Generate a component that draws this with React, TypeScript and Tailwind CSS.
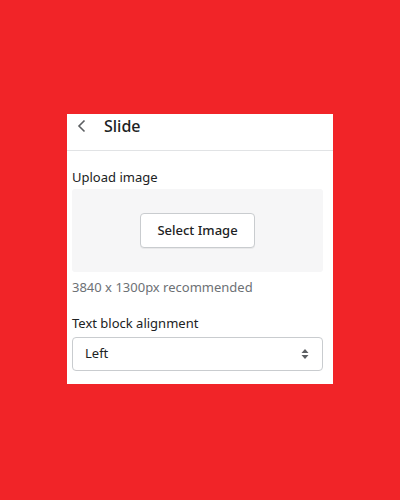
const font = {fontFamily: '"Noto Sans", "Open Sans", sans-serif'};

export default function App() {
  return (
    <div
      className="flex h-[500px] w-[400px] justify-center bg-[#f12428] pt-[114px]"
      style={font}
    >
      <div className="h-[270px] w-[266px] bg-white">
        <div className="flex h-[37px] items-start border-b border-[#e1e3e5] pl-[10px] pt-[2px]">
          <svg width="10" height="18" viewBox="0 0 10 18" className="mt-[1px] text-[#5c5f62]">
            <path d="M7.5 3.5 L2 9 L7.5 14.5" fill="none" stroke="currentColor" strokeWidth="1.6" />
          </svg>
          <span className="ml-[17px] text-[16px] font-medium leading-[20px] text-[#202223]">Slide</span>
        </div>

        <div className="pl-[5px] pr-[10px] pt-[17px]">
          <p className="text-[13px] leading-[18px] text-[#202223]">Upload image</p>
          <div className="mt-[3px] flex h-[83px] items-center justify-center rounded-[3px] bg-[#f6f6f7]">
            <button
              type="button"
              className="h-[35px] w-[115px] rounded-[4px] border border-[#c9cccf] bg-white text-[13px] font-medium text-[#202223] shadow-[0_1px_0_rgba(0,0,0,0.05)]"
            >
              Select Image
            </button>
          </div>
          <p className="mt-[6px] text-[13px] leading-[18px] text-[#6d7175]">
            3840 x 1300px recommended
          </p>

          <p className="mt-[18px] text-[13px] leading-[18px] text-[#202223]">
            Text block alignment
          </p>
          <div className="mt-[5px] flex h-[34px] items-center justify-between rounded-[4px] border border-[#c9cccf] pl-[12px] pr-[12px]">
            <span className="text-[13px] text-[#202223]">Left</span>
            <svg width="10" height="14" viewBox="0 0 10 14" className="text-[#5c5f62]">
              <path d="M5 2 L8.5 6 H1.5 Z" fill="currentColor" />
              <path d="M5 12 L8.5 8 H1.5 Z" fill="currentColor" />
            </svg>
          </div>
        </div>
      </div>
    </div>
  );
}
